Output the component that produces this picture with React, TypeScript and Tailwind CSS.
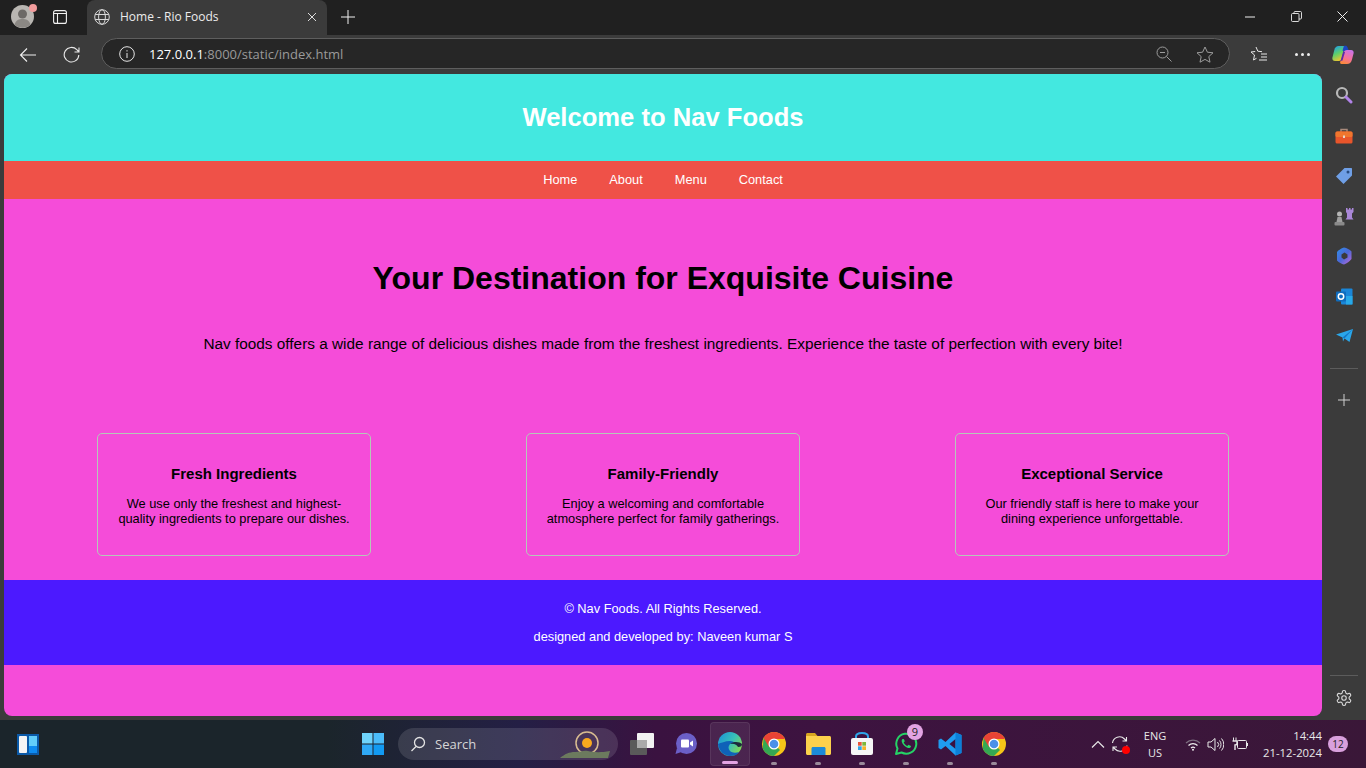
import React from "react";

const seg = { fontFamily: '"Open Sans","Noto Sans",sans-serif' };

function Globe() {
  return (
    <svg width="16" height="16" viewBox="0 0 16 16" fill="none" stroke="#d8d8d8" strokeWidth="1">
      <circle cx="8" cy="8" r="7.3" />
      <ellipse cx="8" cy="8" rx="3.4" ry="7.3" />
      <path d="M1.2 5.5h13.6M1.2 10.5h13.6" />
    </svg>
  );
}

function Avatar() {
  return (
    <div className="relative w-[23px] h-[23px]">
      <svg width="23" height="23" viewBox="0 0 23 23">
        <circle cx="11.5" cy="11.5" r="11.5" fill="#b9b6b2" />
        <circle cx="11.5" cy="9" r="4.5" fill="#6d6a67" />
        <path d="M3.5 19.5c1.5-4.5 4.5-5.5 8-5.5s6.500 1 8 5.500a11.500 11.500 0 0 1-16 0z" fill="#8b8884" />
      </svg>
      <div className="absolute top-[-1px] right-[-3px] w-[8px] h-[8px] rounded-full bg-[#f29b9b]" />
    </div>
  );
}

function Copilot() {
  return (
    <svg width="22" height="20" viewBox="0 0 22 20">
      <defs>
        <linearGradient id="cpa" x1="0.2" y1="0" x2="0.6" y2="1">
          <stop offset="0" stopColor="#1f9fe8" />
          <stop offset="0.5" stopColor="#5fd06a" />
          <stop offset="1" stopColor="#f6c42c" />
        </linearGradient>
        <linearGradient id="cpb" x1="0.7" y1="0" x2="0.3" y2="1">
          <stop offset="0" stopColor="#c873e8" />
          <stop offset="0.55" stopColor="#f76f9a" />
          <stop offset="1" stopColor="#f98a3a" />
        </linearGradient>
      </defs>
      <path d="M6.500 1h6.500L9.500 14c-.4 1.300-1.300 2-2.500 2H3c-2 0-3-1.500-2.600-3.200L2.300 5C3 2.500 4.500 1 6.500 1z" fill="url(#cpa)" />
      <path d="M12 0.800h1.500c1 0 1.700.6 2 1.500L17 6l-3 1.500-3.500-2z" fill="#1a46c4" />
      <path d="M15 5h4c2 0 3 1.500 2.600 3.200L20 14.500C19.300 17.500 17.500 19 15 19H9.500c-1 0-1.700-1-1.300-2L11.500 7.500C12 6 13.300 5 15 5z" fill="url(#cpb)" />
      <path d="M11.200 6.500l1.800.5-2.500 8.500-2 .5z" fill="#5a2aa8" />
    </svg>
  );
}

function SidebarIcon({ children }: { children: React.ReactNode }) {
  return <div className="h-[40px] flex items-center justify-center">{children}</div>;
}

function Sidebar() {
  return (
    <aside className="w-[44px] flex flex-col items-center pt-[1px]">
      <div className="h-[41px] pb-[1px] flex items-center justify-center">
        <svg width="18" height="18" viewBox="0 0 18 18" fill="none">
          <circle cx="7" cy="7" r="5" stroke="#b8b8b8" strokeWidth="2.2" />
          <path d="M11 11l5 5" stroke="#b183e8" strokeWidth="3" strokeLinecap="round" />
        </svg>
      </div>
      <SidebarIcon>
        <svg width="18" height="16" viewBox="0 0 18 16">
          <path d="M6 4V1.500h6V4" fill="none" stroke="#a98a7c" strokeWidth="1.500" />
          <rect x="0.500" y="3.500" width="17" height="12" rx="1.500" fill="#e8552b" />
          <rect x="0.500" y="3.500" width="17" height="5.500" rx="1.500" fill="#f0762e" />
          <rect x="8" y="7.500" width="2" height="2.500" fill="#e8d6c8" />
        </svg>
      </SidebarIcon>
      <SidebarIcon>
        <svg width="18" height="18" viewBox="0 0 18 18">
          <path d="M9.500 1H16c.6 0 1 .4 1 1v6.500L8.500 17 1 9.500z" fill="#6f9fe6" />
          <circle cx="13" cy="5" r="1.500" fill="#274b80" />
        </svg>
      </SidebarIcon>
      <SidebarIcon>
        <svg width="20" height="19" viewBox="0 0 20 19">
          <path d="M12 1h1.500v1.500h1.500V1h1.500v1.500H18V1h1.500v4l-1.500 1.500v4l1.500 2H11.500l1.500-2v-4L12 5z" fill="#a987d8" />
          <circle cx="5.500" cy="7" r="2.500" fill="#b5b5b5" />
          <path d="M3.500 10h4l1 5h-6z" fill="#a0a0a0" />
          <rect x="0.500" y="15" width="10" height="3.500" rx="1" fill="#8a8a8a" />
        </svg>
      </SidebarIcon>
      <SidebarIcon>
        <svg width="16" height="18" viewBox="0 0 16 18">
          <defs>
            <linearGradient id="m3" x1="0" y1="0" x2="1" y2="1">
              <stop offset="0" stopColor="#2f8fe8" />
              <stop offset="0.5" stopColor="#4a68d8" />
              <stop offset="1" stopColor="#c06ad8" />
            </linearGradient>
          </defs>
          <path d="M8 0.500C11 1 13.500 2.500 15.500 4.500V12c-2 2.500-4.500 4.500-7.500 5.500-2.500-.5-5-2-7-4V5C2.500 3 5 1.500 8 0.500z" fill="url(#m3)" />
          <path d="M8.500 5.500l3 2v3l-3.500 2-2.500-2v-3z" fill="#3a3a3a" />
        </svg>
      </SidebarIcon>
      <SidebarIcon>
        <svg width="17" height="17" viewBox="0 0 17 17">
          <rect x="5" y="0.500" width="11.500" height="16" rx="1" fill="#1a86d8" />
          <rect x="10" y="8" width="6.500" height="8.500" fill="#27a9e8" />
          <rect x="0" y="3.500" width="10" height="10" rx="1" fill="#0f6cbd" />
          <circle cx="5" cy="8.500" r="2.700" fill="none" stroke="#fff" strokeWidth="1.500" />
        </svg>
      </SidebarIcon>
      <SidebarIcon>
        <svg width="17" height="14" viewBox="0 0 17 14">
          <path d="M0 5.500L17 0l-3.500 13-5-3.500-1.500 3-.5-4z" fill="#2aa7ea" />
          <path d="M17 0L6.500 8.500 8.500 9.500z" fill="#1478c8" />
        </svg>
      </SidebarIcon>
      <div className="w-[28px] h-px bg-[#5c5c5c] mt-[12px]" />
      <div className="h-[61px] flex items-center justify-center">
        <svg width="14" height="14" viewBox="0 0 14 14" stroke="#d0d0d0" strokeWidth="1"><path d="M7 1v12M1 7h12" /></svg>
      </div>
      <div className="flex-1" />
      <div className="w-[28px] h-px bg-[#5c5c5c]" />
      <div className="h-[44px] flex items-center justify-center">
        <svg width="18" height="18" viewBox="0 0 24 24" fill="none" stroke="#d8d8d8" strokeWidth="1.500">
          <path d="M12.200 2h-.4a2 2 0 0 0-2 2v.2a2 2 0 0 1-1 1.700l-.4.300a2 2 0 0 1-2 0l-.200-.1a2 2 0 0 0-2.700.7l-.200.4a2 2 0 0 0 .7 2.700l.200.100a2 2 0 0 1 1 1.700v.5a2 2 0 0 1-1 1.700l-.200.100a2 2 0 0 0-.7 2.700l.200.400a2 2 0 0 0 2.700.7l.200-.1a2 2 0 0 1 2 0l.4.300a2 2 0 0 1 1 1.700v.2a2 2 0 0 0 2 2h.4a2 2 0 0 0 2-2v-.2a2 2 0 0 1 1-1.700l.4-.3a2 2 0 0 1 2 0l.200.1a2 2 0 0 0 2.700-.7l.200-.4a2 2 0 0 0-.7-2.700l-.200-.1a2 2 0 0 1-1-1.700v-.5a2 2 0 0 1 1-1.700l.200-.1a2 2 0 0 0 .7-2.700l-.200-.4a2 2 0 0 0-2.700-.7l-.200.1a2 2 0 0 1-2 0l-.4-.3a2 2 0 0 1-1-1.700V4a2 2 0 0 0-2-2z" />
          <circle cx="12" cy="12" r="3" />
        </svg>
      </div>
    </aside>
  );
}

const cards = [
  { t: "Fresh Ingredients", d: "We use only the freshest and highest-quality ingredients to prepare our dishes." },
  { t: "Family-Friendly", d: "Enjoy a welcoming and comfortable atmosphere perfect for family gatherings." },
  { t: "Exceptional Service", d: "Our friendly staff is here to make your dining experience unforgettable." },
];

function Page() {
  return (
    <div
      className="flex-1 flex flex-col bg-[#f54cd9] rounded-[8px] overflow-hidden text-black ml-[4px] mb-[4px]"
      style={{ fontFamily: '"Liberation Sans",Arial,sans-serif' }}
    >
      <header className="h-[87px] bg-[#43e8e0] flex items-center justify-center">
        <h1 className="text-[25.6px] font-bold text-white leading-none">Welcome to Nav Foods</h1>
      </header>
      <nav className="h-[38px] bg-[#ef5148] flex items-center justify-center gap-[32px] text-[12.8px] text-white">
        <span>Home</span>
        <span>About</span>
        <span>Menu</span>
        <span>Contact</span>
      </nav>
      <main className="h-[381px] flex flex-col items-center">
        <h2 className="text-[32px] font-bold leading-[37px] mt-[61px]">Your Destination for Exquisite Cuisine</h2>
        <p className="text-[15.36px] leading-[18px] mt-[38px]">
          Nav foods offers a wide range of delicious dishes made from the freshest ingredients. Experience the taste of perfection with every bite!
        </p>
        <div className="w-full flex justify-between px-[93px] mt-[80px]">
          {cards.map((c) => (
            <div key={c.t} className="w-[274px] h-[123px] border border-[#b5c8b8] rounded-[5px] px-[16px] pt-[31px] text-center">
              <h3 className="text-[15px] font-bold leading-[18px]">{c.t}</h3>
              <p className="text-[12.8px] leading-[15px] mt-[13px]">{c.d}</p>
            </div>
          ))}
        </div>
      </main>
      <footer className="h-[85px] bg-[#4c19ff] text-white text-[12.8px] flex flex-col items-center pt-[21px] gap-[12px]">
        <p className="leading-[16px]">© Nav Foods. All Rights Reserved.</p>
        <p className="leading-[16px]">designed and developed by: Naveen kumar S</p>
      </footer>
    </div>
  );
}

function TaskIcon({ children, dot, active }: { children: React.ReactNode; dot?: boolean; active?: boolean }) {
  return (
    <div className={active ? "relative w-[40px] h-[44px] mx-[2px] flex items-center justify-center rounded-[4px] bg-[#ffffff14] border border-[#ffffff14]" : "relative w-[44px] h-[44px] flex items-center justify-center"}>
      {children}
      {dot ? <div className="absolute bottom-[1px] left-1/2 -translate-x-1/2 w-[6px] h-[3px] rounded-full bg-[#9a8a9a]" /> : null}
      {active ? <div className="absolute bottom-[1px] left-1/2 -translate-x-1/2 w-[16px] h-[3px] rounded-full bg-[#e3a3e3]" /> : null}
    </div>
  );
}

function Chrome({ id }: { id: string }) {
  return (
    <svg width="24" height="24" viewBox="0 0 24 24">
      <defs>
        <clipPath id={id}><circle cx="12" cy="12" r="12" /></clipPath>
      </defs>
      <g clipPath={`url(#${id})`}>
        <rect width="24" height="24" fill="#f5c518" />
        <path d="M12 12L1.600 6 0 24h12l6-6z" fill="#34a853" />
        <path d="M12 7h11L20 0H4L1.600 6 7 15z" fill="#ea4335" />
      </g>
      <circle cx="12" cy="12" r="5.500" fill="#fff" />
      <circle cx="12" cy="12" r="4.300" fill="#4a90e8" />
    </svg>
  );
}

function Taskbar() {
  return (
    <div
      className="relative h-[48px] flex items-center text-[#e8e8e8] bg-[linear-gradient(90deg,#1b252b_0%,#1b252b_24%,#241f45_38%,#3a1240_48%,#3d1340_60%,#3a1738_100%)]"
      style={seg}
    >
      <div className="w-[56px] flex justify-center">
        <svg width="24" height="24" viewBox="0 0 24 24">
          <rect x="1" y="2" width="22" height="21" fill="#0b5aa8" />
          <rect x="3" y="4" width="8" height="17" rx="1" fill="#f4f4f4" />
          <rect x="13" y="4" width="8" height="10" fill="#62cdfa" />
          <rect x="13" y="14" width="8" height="7" fill="#0e8bf0" />
        </svg>
      </div>
      <div className="w-[304px]" />
      <div className="flex items-center">
        <div className="w-[26px] flex justify-center">
          <svg width="24" height="24" viewBox="0 0 24 24">
            <path d="M1 1h10.500v10.500H1z" fill="#6fd3fb" />
            <path d="M12.500 1H23v10.500H12.500z" fill="#4bbcf9" />
            <path d="M1 12.500h10.500V23H1z" fill="#2fa8f5" />
            <path d="M12.500 12.500H23V23H12.500z" fill="#129af2" />
          </svg>
        </div>
        <div className="ml-[12px] w-[220px] h-[32px] rounded-full bg-[#ffffff1f] flex items-center pl-[12px] relative">
          <svg width="16" height="16" viewBox="0 0 16 16" fill="none" stroke="#e4e4e4" strokeWidth="1.300">
            <circle cx="9.500" cy="6.500" r="5" />
            <path d="M6 10.500L1.500 15" />
          </svg>
          <span className="ml-[9px] text-[13px] text-[#d6d6d6] leading-none">Search</span>
          <svg width="50" height="30" viewBox="0 0 50 30" className="absolute right-[8px] top-[1px]">
            <circle cx="27" cy="14" r="11" fill="none" stroke="#d8bc90" strokeWidth="1.500" />
            <circle cx="27" cy="14" r="5" fill="#f9a91f" />
            <path d="M0 29c5-4 9-6 15-6s8-2 13-1 11 2 22 0l-2 7z" fill="#6c7a5e" />
          </svg>
        </div>
        <div className="w-[2px]" />
        <TaskIcon>
          <svg width="26" height="24" viewBox="0 0 26 24">
            <rect x="1" y="8" width="17" height="15" rx="1" fill="#5a5a5a" />
            <rect x="8" y="1" width="17" height="15" rx="1" fill="#f2f2f2" />
            <rect x="8" y="8" width="10" height="8" fill="#aaa" />
          </svg>
        </TaskIcon>
        <TaskIcon>
          <svg width="24" height="24" viewBox="0 0 24 24">
            <circle cx="12.500" cy="11.500" r="10.500" fill="#6b5fc7" />
            <path d="M3 16l-1.500 6 6-2z" fill="#6b5fc7" />
            <rect x="7" y="7.500" width="8" height="8" rx="1" fill="#fff" />
            <path d="M16 10.500l3-2v6l-3-2z" fill="#fff" />
          </svg>
        </TaskIcon>
        <TaskIcon active>
          <svg width="26" height="26" viewBox="0 0 26 26">
            <defs>
              <linearGradient id="ed" x1="0" y1="0" x2="1" y2="0.600">
                <stop offset="0" stopColor="#1a8fd8" />
                <stop offset="0.6" stopColor="#38c0b8" />
                <stop offset="1" stopColor="#7fd858" />
              </linearGradient>
            </defs>
            <circle cx="13" cy="13" r="12" fill="url(#ed)" />
            <path d="M1 13C2 20 7 25 13 25c4 0 7-1 9-4-3 1-7 1-9-1-2-2-2-5 0-7 2-1 6 0 7 2 0 0-2-5-7-5s-9 2-12 3z" fill="#0f62b8" />
            <path d="M13 13c3-1 7 0 8 3 3 0 4-1 4-3-2-2-8-3-12 0z" fill="#1d2a3c" />
          </svg>
        </TaskIcon>
        <TaskIcon dot><Chrome id="chr1" /></TaskIcon>
        <TaskIcon dot>
          <svg width="25" height="22" viewBox="0 0 25 22">
            <path d="M0 1.500C0 .7.700 0 1.500 0H9l2.500 3H0z" fill="#d8a520" />
            <path d="M0 3h23.500c.8 0 1.500.7 1.500 1.500V20.500c0 .8-.7 1.500-1.500 1.500h-22C.700 22 0 21.300 0 20.500z" fill="#fcd14c" />
            <path d="M7 14h11c1 0 1.500.6 1.500 1.500V22h-14v-6.500C5.500 14.600 6 14 7 14z" fill="#1c8ad8" />
          </svg>
        </TaskIcon>
        <TaskIcon dot>
          <svg width="24" height="24" viewBox="0 0 24 24">
            <path d="M6 7V4.500C6 2 8 1 12 1s6 1 6 3.500V7" fill="none" stroke="#2ea6e8" strokeWidth="2" />
            <rect x="1" y="6" width="22" height="17" rx="2" fill="#f6f6f6" />
            <rect x="8" y="10" width="3.700" height="3.700" fill="#e8543a" />
            <rect x="12.300" y="10" width="3.700" height="3.700" fill="#7cb83a" />
            <rect x="8" y="14.300" width="3.700" height="3.700" fill="#2ea6e8" />
            <rect x="12.300" y="14.300" width="3.700" height="3.700" fill="#f6b52a" />
          </svg>
        </TaskIcon>
        <TaskIcon dot>
          <svg width="24" height="24" viewBox="0 0 24 24" fill="none">
            <path d="M2 22l1.500-5.500A10 10 0 1 1 7.500 20.500z" stroke="#25d366" strokeWidth="2" strokeLinejoin="round" />
            <path d="M8.500 7c-1 .8-1.200 2.500 0 4.500s3.500 4 5.500 4.500c2 .3 3-.8 3-2l-2.500-1.300-1.200 1.200c-1.500-.6-3-2-3.600-3.500L10.800 9.300 9.800 7z" fill="#25d366" />
          </svg>
          <div className="absolute top-[2px] right-[5px] w-[16px] h-[16px] rounded-full bg-[#e3a3e3] text-[#1f1f1f] text-[11px] leading-[16px] text-center">9</div>
        </TaskIcon>
        <TaskIcon dot>
          <svg width="24" height="24" viewBox="0 0 24 24">
            <path d="M17.500 0.500L23.500 3v18l-6 2.500L7.500 14l-4.500 3.500L0.500 16v-8L3 6.500 7.500 10z" fill="#1f9cf0" />
            <path d="M17.500 7l-6 5 6 5z" fill="#3a1240" />
            <path d="M17.500 0.500L23.500 3v18l-6 2.500z" fill="#0b7fd8" />
          </svg>
        </TaskIcon>
        <TaskIcon dot><Chrome id="chr2" /></TaskIcon>
      </div>
      <div className="flex-1" />
      <div className="flex items-center pr-[18px]">
        <svg width="14" height="8" viewBox="0 0 14 8" fill="none" stroke="#e8e8e8" strokeWidth="1.200"><path d="M1 7.500L7 1.500l6 6" /></svg>
        <div className="relative w-[18px] h-[18px] ml-[6px]">
          <svg width="18" height="18" viewBox="0 0 18 18" fill="none" stroke="#e8e8e8" strokeWidth="1.100">
            <path d="M1.500 8a7 7 0 0 1 12-4l2 2M15.500 2v4h-4M16 10.500a7 7 0 0 1-12 3.500l-2-2M2 16v-4h4" />
          </svg>
          <div className="absolute bottom-[-1px] right-[-1px] w-[8px] h-[8px] rounded-full bg-[#ff0000]" />
        </div>
        <div className="ml-[11px] w-[30px] text-center text-[11px] leading-[17px]">
          <div>ENG</div>
          <div>US</div>
        </div>
        <svg width="16" height="13" viewBox="0 0 16 13" fill="none" className="ml-[15px]" strokeWidth="1.200">
          <path d="M1 5a10 10 0 0 1 14 0" stroke="#7d6f80" />
          <path d="M3.500 7.500a6.500 6.500 0 0 1 9 0M6 10a3 3 0 0 1 4 0" stroke="#eee" />
          <circle cx="8" cy="11.800" r="1" fill="#eee" />
        </svg>
        <svg width="17" height="15" viewBox="0 0 17 15" fill="none" stroke="#e8e8e8" strokeWidth="1" className="ml-[6px]">
          <path d="M1 5h3l4-3.500v12L4 10H1z" />
          <path d="M10.500 5a3.500 3.500 0 0 1 0 5M12.500 3.500a6 6 0 0 1 0 8M14.500 1.500a9 9 0 0 1 0 12" />
        </svg>
        <svg width="16" height="14" viewBox="0 0 16 14" className="ml-[8px]" fill="none" stroke="#e8e8e8">
          <rect x="5.500" y="3.500" width="9" height="8" rx="1" />
          <path d="M15.500 6v3" />
          <path d="M1.500 0.500V4M4 0.500V4" />
          <path d="M0.500 4h4.500v2.500c0 1-1 1.500-2 1.500v5" strokeWidth="1.400" />
        </svg>
        <div className="ml-[14px] w-[60px] text-right text-[11.3px] leading-[17px]">
          <div>14:44</div>
          <div className="whitespace-nowrap -ml-[4px]">21-12-2024</div>
        </div>
        <div className="ml-[6px] w-[20px] h-[16px] rounded-full bg-[#d9a0dd] text-[#1f1f1f] text-[10px] leading-[16px] text-center">12</div>
      </div>
    </div>
  );
}

export default function App() {
  return (
    <div className="w-[1366px] h-[768px] overflow-hidden flex flex-col bg-[#3b3b3b]">
      <div className="h-[35px] bg-[#202020] flex items-end text-white" style={seg}>
        <div className="w-[87px] h-[35px] flex items-center pl-[11px] pb-[2px]">
          <Avatar />
          <svg width="14" height="14" viewBox="0 0 14 14" fill="none" stroke="#f0f0f0" strokeWidth="1.100" className="ml-[19px]">
            <rect x="0.600" y="0.600" width="12.800" height="12.800" rx="2" />
            <path d="M0.600 3.500h12.800M4.500 3.500v10" />
          </svg>
        </div>
        <div className="w-[240px] h-[35px] bg-[#3b3b3b] rounded-t-[8px] flex items-center pl-[7px] pr-[10px] pb-[2px]">
          <Globe />
          <span className="ml-[10px] text-[12px] text-[#ececec] flex-1">Home - Rio Foods</span>
          <svg width="10" height="10" viewBox="0 0 10 10" stroke="#dcdcdc" strokeWidth="1"><path d="M1 1l8 8M9 1l-8 8" /></svg>
        </div>
        <div className="w-[42px] h-[35px] flex items-center justify-center pb-[2px]">
          <svg width="14" height="14" viewBox="0 0 14 14" stroke="#f0f0f0" strokeWidth="1"><path d="M7 0v14M0 7h14" /></svg>
        </div>
        <div className="flex-1" />
        <div className="h-[35px] flex items-center pb-[2px] pr-[1px]">
          <div className="w-[46px] flex justify-center"><svg width="10" height="2" viewBox="0 0 10 2" stroke="#eee"><path d="M0 1h10" /></svg></div>
          <div className="w-[46px] flex justify-center">
            <svg width="11" height="11" viewBox="0 0 11 11" fill="none" stroke="#eee" strokeWidth="0.900">
              <rect x="0.500" y="2.500" width="7.500" height="8" rx="1" />
              <path d="M3 2.500V1.500c0-.6.400-1 1-1h5.500c.6 0 1 .4 1 1V7c0 .6-.4 1-1 1H8" />
            </svg>
          </div>
          <div className="w-[46px] flex justify-center"><svg width="11" height="11" viewBox="0 0 11 11" stroke="#eee" strokeWidth="1"><path d="M.5.500l10 10M10.500.500l-10 10" /></svg></div>
        </div>
      </div>

      <div className="h-[39px] flex items-center" style={seg}>
        <div className="w-[56px] flex justify-center">
          <svg width="18" height="16" viewBox="0 0 18 16" fill="none" stroke="#f0f0f0" strokeWidth="1.100"><path d="M17 8H1.500M8 1.500L1.500 8 8 14.500" /></svg>
        </div>
        <div className="w-[32px] flex justify-center">
          <svg width="18" height="18" viewBox="0 0 18 18" fill="none" stroke="#e8e8e8" strokeWidth="1.100">
            <path d="M15.800 9a7.300 7.300 0 1 1-2-5.300L16 6M16 1.500V6h-4.500" />
          </svg>
        </div>
        <div className="ml-[13px] w-[1129px] h-[31px] mb-[2px] rounded-full border border-[#5e5e5e] bg-[#262626] flex items-center pl-[17px] pr-[15px] pt-[1px]">
          <svg width="16" height="16" viewBox="0 0 16 16" fill="none" stroke="#e6e6e6" strokeWidth="1">
            <circle cx="8" cy="8" r="7.300" />
            <path d="M8 7v5M8 4.200v1.300" />
          </svg>
          <span className="ml-[14px] text-[13px] leading-none text-[#9a9a9a] flex-1">
            <span className="text-white">127.0.0.1</span>:8000/static/index.html
          </span>
          <svg width="16" height="16" viewBox="0 0 16 16" fill="none" stroke="#9c9c9c" strokeWidth="1">
            <circle cx="6.500" cy="6.500" r="5.500" />
            <path d="M4 6.500h5M10.500 10.500l5 5" />
          </svg>
          <svg width="18" height="17" viewBox="0 0 18 17" fill="none" stroke="#9c9c9c" strokeWidth="1" className="ml-[24px]">
            <path d="M9 1l2.400 5.200 5.600.6-4.200 3.800 1.200 5.600L9 13.400l-5 2.800 1.200-5.600L1 6.800l5.600-.6z" />
          </svg>
        </div>
        <div className="w-[58px] flex justify-center">
          <svg width="18" height="17" viewBox="0 0 18 17" fill="none" stroke="#e8e8e8" strokeWidth="1">
            <path d="M6 1l1.800 4.200 4.200.5M1 6l3.500 3L3.500 14l3-1.700" />
            <path d="M1 6l4.200-.5M11 8h6M11 11h6M9 14h8" />
          </svg>
        </div>
        <div className="w-[28px] flex justify-center gap-[3px]">
          <div className="w-[3px] h-[3px] rounded-full bg-[#eee]" />
          <div className="w-[3px] h-[3px] rounded-full bg-[#eee]" />
          <div className="w-[3px] h-[3px] rounded-full bg-[#eee]" />
        </div>
        <div className="flex-1 flex justify-center pl-[4px]"><Copilot /></div>
      </div>

      <div className="h-[646px] flex">
        <div className="flex-1 flex flex-col min-w-0"><Page /></div>
        <Sidebar />
      </div>
      <Taskbar />
    </div>
  );
}
